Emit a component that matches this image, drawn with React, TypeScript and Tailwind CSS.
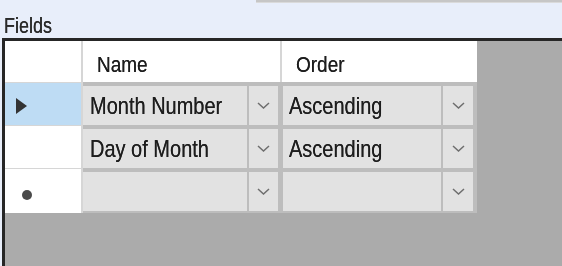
const rows = [
  { name: 'Month Number', order: 'Ascending', mark: 'current' },
  { name: 'Day of Month', order: 'Ascending', mark: '' },
  { name: '', order: '', mark: 'new' },
];

const Chevron = () => (
  <svg width="13" height="7" viewBox="0 0 13 7">
    <path d="M1 1 L6.5 6 L12 1" fill="none" stroke="#6e6e6e" strokeWidth="1.5" />
  </svg>
);

const Txt = ({ children }: { children: React.ReactNode }) => (
  <span className="inline-block origin-center scale-y-[1.2] [text-shadow:0_0_0.5px_#333]">{children}</span>
);

const App = () => {
  return (
    <div className="flex h-[266px] w-[562px] flex-col overflow-hidden bg-[#e8eefa] font-['Liberation_Sans',Arial,sans-serif] text-[#1d1d1d]">
      <div className="flex h-[3px] justify-end">
        <div className="w-[306px] border-b border-[#dadada] bg-[#c6c6c6]" />
      </div>
      <div className="h-[35px] pl-[4px] pt-[13px] text-[18px] leading-[20px] text-[#2a2a2a]">
        <Txt>Fields</Txt>
      </div>
      <div className="ml-[2px] flex-1 border-l-[3px] border-t-[3px] border-[#262626] bg-[#ababab]">
        {/* column headers */}
        <div className="flex h-[41px]">
          <div className="w-[78px] border-r-2 border-[#d6d6d6] bg-white" />
          <div className="flex w-[199px] items-center border-r-2 border-[#d6d6d6] bg-white pl-[14px] pt-[7px] text-[19px]">
            <Txt>Name</Txt>
          </div>
          <div className="flex w-[195px] items-center bg-white pl-[14px] pt-[7px] text-[19px]">
            <Txt>Order</Txt>
          </div>
        </div>
        {rows.map((r, i) => {
          const last = i === rows.length - 1;
          return (
            <div key={i} className={last ? 'flex h-[45px]' : 'flex h-[43px]'}>
              <div
                className={
                  r.mark === 'current'
                    ? 'flex w-[78px] items-center border-r-2 border-t border-[#d6d6d6] bg-[#bedcf4] pl-[11px] pt-[3px]'
                    : 'flex w-[78px] items-center border-r-2 border-t border-[#d6d6d6] bg-white pl-[17px]'
                }
              >
                {r.mark === 'current' && (
                  <svg width="11" height="16" viewBox="0 0 11 16">
                    <path d="M0 0 L11 8 L0 16 Z" fill="#333" />
                  </svg>
                )}
                {r.mark === 'new' && <div className="mt-[7px] h-[10px] w-[10px] rounded-full bg-[#4a4a4a] blur-[0.7px]" />}
              </div>
              <div className={last ? 'flex w-[394px] bg-[#bdbdbd] pb-[2px] pt-[4px]' : 'flex w-[394px] bg-[#bdbdbd] pt-[4px]'}>
                <div className="flex w-[164px] items-center bg-[#e2e2e2] pl-[7px] text-[20px]">
                  <Txt>{r.name}</Txt>
                </div>
                <div className="ml-[2px] flex w-[29px] items-center justify-center bg-[#e2e2e2]">
                  <Chevron />
                </div>
                <div className="ml-[5px] flex w-[158px] items-center bg-[#e2e2e2] pl-[6px] text-[20px]">
                  <Txt>{r.order}</Txt>
                </div>
                <div className="ml-[2px] flex w-[30px] items-center justify-center bg-[#e2e2e2]">
                  <Chevron />
                </div>
              </div>
            </div>
          );
        })}
      </div>
    </div>
  );
};

export default App;
